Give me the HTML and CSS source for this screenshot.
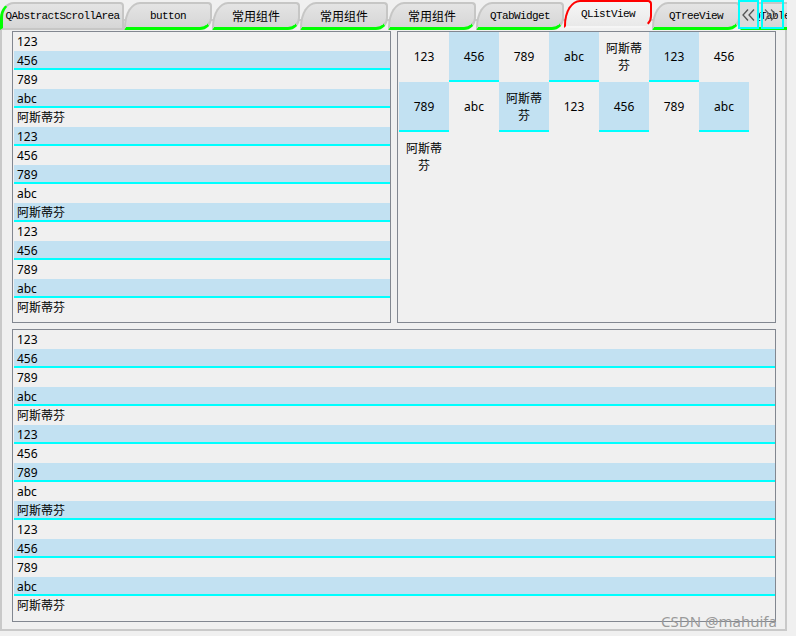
FILE: index.html
```html
<!DOCTYPE html>
<html>
<head>
<meta charset="utf-8">
<link rel="stylesheet" href="styles.css">
</head>
<body>
<div class="window">
  <div class="tabbar">
    <div class="tab first">QAbstractScrollArea</div>
    <div class="tab">button</div>
    <div class="tab cn">常用组件</div>
    <div class="tab cn">常用组件</div>
    <div class="tab cn">常用组件</div>
    <div class="tab">QTabWidget</div>
    <div class="tab selected">QListView</div>
    <div class="tab">QTreeView</div>
    <div class="tab">QTableView</div>
    <div class="scroll-btn btn-left"><svg width="13" height="12" viewBox="0 0 13 12"><polyline points="6,0.5 1,6 6,11.5" fill="none" stroke="#555" stroke-width="1.3"/><polyline points="12,0.5 7,6 12,11.5" fill="none" stroke="#555" stroke-width="1.3"/></svg></div>
    <div class="scroll-btn btn-right"><svg width="13" height="12" viewBox="0 0 13 12"><polyline points="1,0.5 6,6 1,11.5" fill="none" stroke="#666" stroke-width="1.3"/><polyline points="7,0.5 12,6 7,11.5" fill="none" stroke="#666" stroke-width="1.3"/></svg></div>
  </div>
  <div class="pane">
    <div class="top-row">
      <div class="list">
        <div class="item">123</div>
        <div class="item alt">456</div>
        <div class="item">789</div>
        <div class="item alt">abc</div>
        <div class="item">阿斯蒂芬</div>
        <div class="item alt">123</div>
        <div class="item">456</div>
        <div class="item alt">789</div>
        <div class="item">abc</div>
        <div class="item alt">阿斯蒂芬</div>
        <div class="item">123</div>
        <div class="item alt">456</div>
        <div class="item">789</div>
        <div class="item alt">abc</div>
        <div class="item">阿斯蒂芬</div>
      </div>
      <div class="list icons">
        <div class="cell">123</div>
        <div class="cell alt">456</div>
        <div class="cell">789</div>
        <div class="cell alt">abc</div>
        <div class="cell">阿斯蒂芬</div>
        <div class="cell alt">123</div>
        <div class="cell">456</div>
        <div class="cell alt">789</div>
        <div class="cell">abc</div>
        <div class="cell alt">阿斯蒂芬</div>
        <div class="cell">123</div>
        <div class="cell alt">456</div>
        <div class="cell">789</div>
        <div class="cell alt">abc</div>
        <div class="cell">阿斯蒂芬</div>
      </div>
    </div>
    <div class="list wide">
      <div class="item">123</div>
      <div class="item alt">456</div>
      <div class="item">789</div>
      <div class="item alt">abc</div>
      <div class="item">阿斯蒂芬</div>
      <div class="item alt">123</div>
      <div class="item">456</div>
      <div class="item alt">789</div>
      <div class="item">abc</div>
      <div class="item alt">阿斯蒂芬</div>
      <div class="item">123</div>
      <div class="item alt">456</div>
      <div class="item">789</div>
      <div class="item alt">abc</div>
      <div class="item">阿斯蒂芬</div>
    </div>
  </div>
  <div class="watermark">CSDN @mahuifa</div>
</div>
</body>
</html>
```
FILE: styles.css
```css
html, body {
  margin: 0;
  padding: 0;
  background: #f0f0f0;
}
.window {
  position: relative;
  width: 796px;
  height: 636px;
  overflow: hidden;
  font-family: "Noto Sans", "Noto Sans CJK SC", sans-serif;
  font-size: 12px;
  color: #000;
}
.tabbar {
  position: relative;
  z-index: 1;
  display: flex;
  width: 787px;
  height: 30px;
  overflow: hidden;
}
.tab {
  flex: 0 0 88px;
  box-sizing: border-box;
  height: 28px;
  margin-top: 2px;
  border: 2px solid #c6c6c5;
  border-bottom: 3px solid #00ff00;
  border-radius: 16px 4px 12px 0 / 25px 4px 12px 0;
  background: linear-gradient(#e4e4e4, #d6d6d6);
  display: flex;
  align-items: center;
  justify-content: center;
  font-family: "Liberation Mono", monospace;
  font-size: 11px;
  letter-spacing: -0.6px;
  white-space: nowrap;
}
.tab.cn {
  font-family: "Noto Sans CJK SC", sans-serif;
  font-size: 12px;
  letter-spacing: 0;
}
.tab.first {
  flex-basis: 124px;
  border-left: 3px solid #00ff00;
  border-bottom: 2px solid #c6c6c5;
  border-radius: 14px 4px 0 0 / 16px 4px 0 0;
}
.tab.selected {
  margin-top: 0;
  height: 28px;
  border: 2px solid #ff0000;
  border-bottom: 2px solid transparent;
  border-radius: 16px 4px 12px 0 / 25px 4px 12px 0;
  background: linear-gradient(#f6f6f6, #e9e9e9);
}
.scroll-btn {
  position: absolute;
  top: 0;
  height: 29px;
  box-sizing: border-box;
  border: 2px solid #00ffff;
  display: flex;
  align-items: center;
}
.btn-left {
  left: 738px;
  width: 21px;
  background: #dcdcdc;
  justify-content: center;
}
.btn-right {
  left: 761px;
  width: 23px;
  background: transparent;
  justify-content: flex-start;
  padding-left: 1px;
}
.pane {
  margin-top: -11px;
  width: 787px;
  height: 612px;
  box-sizing: border-box;
  border: 2px solid #c9c9c9;
  padding: 10px 9px 7px 10px;
  display: flex;
  flex-direction: column;
  gap: 6px;
}
.top-row {
  display: flex;
  gap: 6px;
  height: 292px;
  flex: 0 0 292px;
}
.list {
  flex: 1 1 0;
  box-sizing: border-box;
  border: 1px solid #828790;
  padding-left: 1px;
  overflow: hidden;
}
.list.wide {
  flex: 1 1 auto;
}
.item {
  height: 17px;
  line-height: 20px;
  padding-left: 3px;
  border-bottom: 2px solid transparent;
  white-space: nowrap;
  overflow: hidden;
}
.item.alt, .cell.alt {
  background: #c2e1f2;
  border-bottom-color: #00ffff;
}
.icons {
  display: flex;
  flex-wrap: wrap;
  align-content: flex-start;
}
.cell {
  box-sizing: border-box;
  width: 50px;
  height: 50px;
  padding: 1px 3px 0;
  border-bottom: 2px solid transparent;
  display: flex;
  align-items: center;
  justify-content: center;
  text-align: center;
  line-height: 17px;
}
.watermark {
  position: absolute;
  left: 661px;
  top: 611px;
  font-family: "Noto Sans", sans-serif;
  font-size: 15px;
  line-height: 20px;
  color: #9a9a9a;
}
```
